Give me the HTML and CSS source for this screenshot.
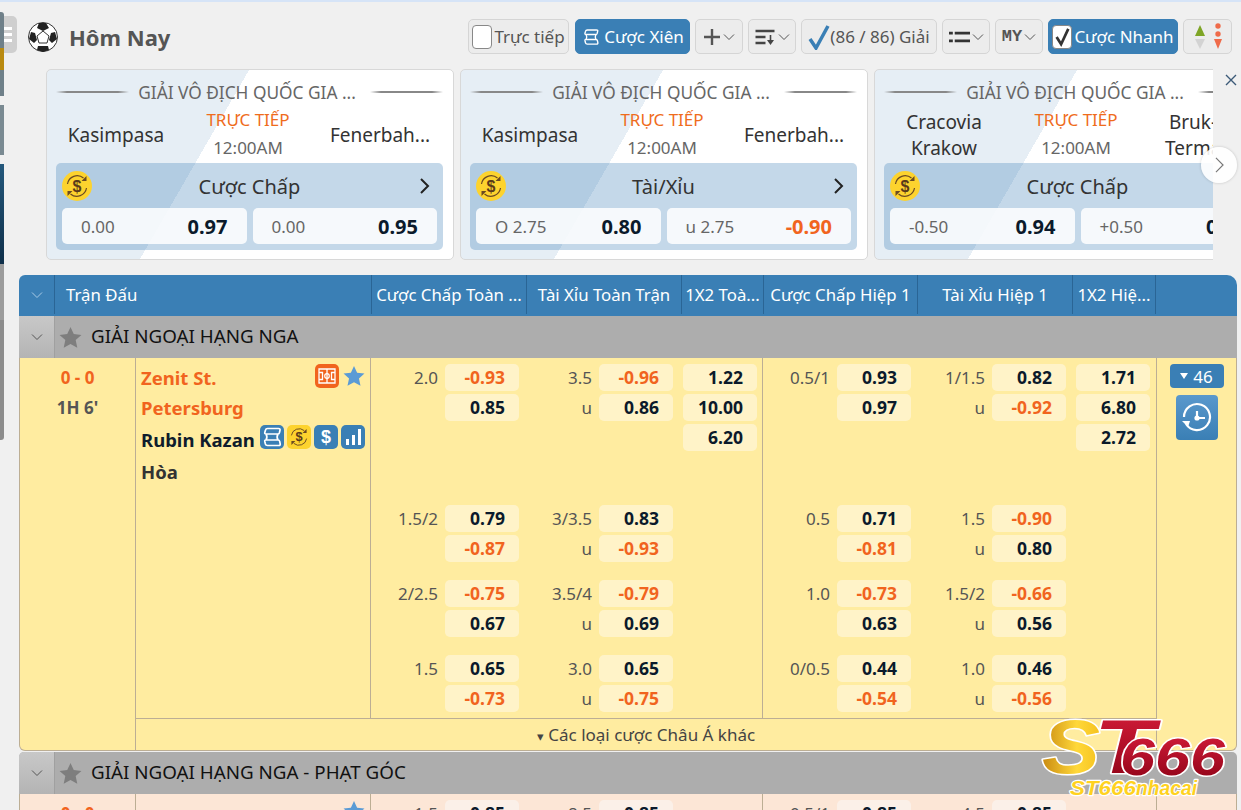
FILE: index.html
```html
<!DOCTYPE html>
<html lang="vi">
<head>
    <meta charset="UTF-8">
    <meta name="viewport" content="width=device-width, initial-scale=1.0">
    <title>Hôm Nay</title>
    <link rel="stylesheet" href="styles.css">
</head>
<body>

<!-- Shared icons -->
<svg class="defs" width="0" height="0">
    <symbol id="i-coin" viewBox="0 0 30 30">
        <path d="M5.500 13a9.800 9.800 0 0 1 16-6M24.500 17a9.800 9.800 0 0 1-16 6" fill="none" stroke="#6b4a22" stroke-width="1.200"/>
        <path d="M24.500 5v5h-5zM5.500 25v-5h5z" fill="#6b4a22"/>
        <text x="15" y="20.500" text-anchor="middle" class="coin-text">$</text>
    </symbol>
    <symbol id="i-parlay" viewBox="0 0 24 24">
        <path d="M7.500 3.500h11q2 0 1.500 1.800l-.6 2.400q-.4 1.300-1.600 1.300H6q-1.600 0-1.200-1.600l.7-2.400q.4-1.500 2-1.500zM6 9c1.200 2 1.200 4 0 6M18 9c-1.200 2-1.200 4 0 6M6 15h12q1.400 0 1.700 1.400l.5 2.400q.3 1.700-1.500 1.700H7.500q-1.700 0-2.100-1.500l-.6-2.500Q4.500 15 6 15z" fill="none" stroke="currentColor" stroke-width="1.700" stroke-linejoin="round"/>
    </symbol>
    <symbol id="i-star" viewBox="0 0 24 24">
        <path d="M12 1l3.400 7.400 8 .9-6 5.400 1.700 8L12 18.700l-7.100 4 1.700-8-6-5.400 8-.9z" fill="currentColor"/>
    </symbol>
    <symbol id="i-chev" viewBox="0 0 12 8">
        <path d="M1 1.500l5 5 5-5" fill="none" stroke="currentColor" stroke-width="1"/>
    </symbol>
</svg>

<!-- Collapsed sidebar behind the page -->
<div class="side-strip">
    <div class="strip-a"></div>
    <div class="strip-b"></div>
    <div class="strip-c"></div>
    <div class="strip-d"></div>
    <div class="strip-e"></div>
</div>
<div class="side-handle"><span></span><span></span><span></span></div>

<div class="page">

    <!-- Title and toolbar -->
    <div class="top-row">
        <div class="page-title">
            <svg class="ball" viewBox="0 0 30 30">
                <circle cx="15" cy="15" r="14.500" fill="#fff" stroke="#333"/>
                <path d="M15 9l6-3-3-5h-7l-2 5zM3 10l4 1 2 7-3 3-5-4zM27 10l-4 1-2 7 3 3 5-4zM10 24h10l1 4-6 2-6-2z" fill="#222"/>
                <path d="M15 9l6 5-2 7h-8l-2-7z" fill="#fff" stroke="#333"/>
            </svg>
            <span>Hôm Nay</span>
        </div>
        <div class="toolbar">
            <div class="tool tool-live"><span class="check"></span>Trực tiếp</div>
            <div class="tool tool-on tool-parlay"><svg class="ic20"><use href="#i-parlay"/></svg>Cược Xiên</div>
            <div class="tool tool-sm">
                <svg class="ic18" viewBox="0 0 18 18"><path d="M9 1v16M1 9h16" stroke="#555" stroke-width="2.400"/></svg>
                <svg class="chev"><use href="#i-chev"/></svg>
            </div>
            <div class="tool tool-sm">
                <svg class="ic22" viewBox="0 0 20 18"><path d="M0 3h19M0 9h10M0 15h10" stroke="#444" stroke-width="2.400"/><path d="M15 7v7" stroke="#444" stroke-width="1.600"/><path d="M11.500 12h7l-3.500 5z" fill="#444"/></svg>
                <svg class="chev"><use href="#i-chev"/></svg>
            </div>
            <div class="tool tool-leagues">
                <svg class="tick" viewBox="0 0 22 26"><path d="M2 15l6 9L20 2" fill="none" stroke="#3a7fb5" stroke-width="3.500"/></svg>(86 / 86) Giải
            </div>
            <div class="tool tool-sm">
                <svg class="ic22" viewBox="0 0 22 18"><path d="M0 5h4M6 5h16M0 13h4M6 13h16" stroke="#333" stroke-width="3"/></svg>
                <svg class="chev"><use href="#i-chev"/></svg>
            </div>
            <div class="tool tool-sm">
                <span class="tool-my">MY</span>
                <svg class="chev"><use href="#i-chev"/></svg>
            </div>
            <div class="tool tool-on tool-quick">
                <span class="check check-on"><svg viewBox="0 0 20 20"><path d="M4 10l5 8L17 1" fill="none" stroke="#333" stroke-width="3"/></svg></span>Cược Nhanh
            </div>
            <div class="tool tool-arrows">
                <svg viewBox="0 0 14 26" class="ic-arrows"><path d="M7 1l5 11H2z" fill="#7ea526"/><path d="M2 15h10l-5 10z" fill="#d3d3d3"/></svg>
                <svg viewBox="0 0 10 28" class="ic-dots"><circle cx="5" cy="3" r="2.700" fill="#ef6b4a"/><circle cx="5" cy="11" r="2.700" fill="#ef6b4a"/><path d="M1 16h8l-4 10z" fill="#ef6b4a"/></svg>
            </div>
        </div>
    </div>

    <!-- Featured matches -->
    <div class="featured">
        <div class="cards">
            <div class="card">
                <div class="card-title"><i></i><span>GIẢI VÔ ĐỊCH QUỐC GIA ...</span><i></i></div>
                <div class="card-teams">
                    <div class="card-team">Kasimpasa</div>
                    <div class="card-mid"><div class="live">TRỰC TIẾP</div><div class="time">12:00AM</div></div>
                    <div class="card-team">Fenerbah...</div>
                </div>
                <div class="card-bar">
                    <div class="bar-head">
                        <span class="coin"><svg><use href="#i-coin"/></svg></span>
                        <span class="bar-name">Cược Chấp</span>
                        <svg class="bar-next" viewBox="0 0 12 18"><path d="M2 2l7 7-7 7" fill="none" stroke="#222" stroke-width="2"/></svg>
                    </div>
                    <div class="bar-odds">
                        <div class="bar-odd"><span>0.00</span><b>0.97</b></div>
                        <div class="bar-odd"><span>0.00</span><b>0.95</b></div>
                    </div>
                </div>
            </div>
            <div class="card">
                <div class="card-title"><i></i><span>GIẢI VÔ ĐỊCH QUỐC GIA ...</span><i></i></div>
                <div class="card-teams">
                    <div class="card-team">Kasimpasa</div>
                    <div class="card-mid"><div class="live">TRỰC TIẾP</div><div class="time">12:00AM</div></div>
                    <div class="card-team">Fenerbah...</div>
                </div>
                <div class="card-bar">
                    <div class="bar-head">
                        <span class="coin"><svg><use href="#i-coin"/></svg></span>
                        <span class="bar-name">Tài/Xỉu</span>
                        <svg class="bar-next" viewBox="0 0 12 18"><path d="M2 2l7 7-7 7" fill="none" stroke="#222" stroke-width="2"/></svg>
                    </div>
                    <div class="bar-odds">
                        <div class="bar-odd"><span>O 2.75</span><b>0.80</b></div>
                        <div class="bar-odd"><span>u 2.75</span><b class="neg">-0.90</b></div>
                    </div>
                </div>
            </div>
            <div class="card">
                <div class="card-title"><i></i><span>GIẢI VÔ ĐỊCH QUỐC GIA ...</span><i></i></div>
                <div class="card-teams">
                    <div class="card-team">Cracovia<br>Krakow</div>
                    <div class="card-mid"><div class="live">TRỰC TIẾP</div><div class="time">12:00AM</div></div>
                    <div class="card-team">Bruk-Bet<br>Termalica</div>
                </div>
                <div class="card-bar">
                    <div class="bar-head">
                        <span class="coin"><svg><use href="#i-coin"/></svg></span>
                        <span class="bar-name">Cược Chấp</span>
                        <svg class="bar-next" viewBox="0 0 12 18"><path d="M2 2l7 7-7 7" fill="none" stroke="#222" stroke-width="2"/></svg>
                    </div>
                    <div class="bar-odds">
                        <div class="bar-odd"><span>-0.50</span><b>0.94</b></div>
                        <div class="bar-odd"><span>+0.50</span><b>0.96</b></div>
                    </div>
                </div>
            </div>
        </div>
        <div class="featured-close">
            <svg viewBox="0 0 12 12"><path d="M1 1l10 10M11 1L1 11" stroke="#3c5a78" stroke-width="1.400"/></svg>
        </div>
        <div class="featured-next">
            <svg viewBox="0 0 10 18"><path d="M1 1l8 8-8 8" fill="none" stroke="#777" stroke-width="1.300"/></svg>
        </div>
    </div>

    <!-- Odds table -->
    <div class="odds-table">
        <div class="table-head">
            <div class="th th-toggle"><svg class="chev chev-head"><use href="#i-chev"/></svg></div>
            <div class="th th-match">Trận Đấu</div>
            <div class="th">Cược Chấp Toàn ...</div>
            <div class="th">Tài Xỉu Toàn Trận</div>
            <div class="th">1X2 Toà...</div>
            <div class="th">Cược Chấp Hiệp 1</div>
            <div class="th">Tài Xỉu Hiệp 1</div>
            <div class="th">1X2 Hiệ...</div>
            <div class="th th-last"></div>
        </div>

        <div class="league">
            <div class="league-toggle"><svg class="chev"><use href="#i-chev"/></svg></div>
            <svg class="league-star"><use href="#i-star"/></svg>
            <span>GIẢI NGOẠI HẠNG NGA</span>
        </div>

        <div class="match">
            <div class="score">
                <div class="score-num">0 - 0</div>
                <div class="score-time">1H 6'</div>
            </div>
            <div class="match-mid">
                <div class="match-top">
                    <div class="teams">
                        <div class="team team-home">
                            <span class="team-name">Zenit St.<br>Petersburg</span>
                            <span class="team-icons">
                                <span class="badge badge-orange">
                                    <svg viewBox="0 0 24 24"><path d="M4 5h16v14H4zM12 5v14M4 8.500h3.500v7H4M20 8.500h-3.500v7H20" fill="none" stroke="#fff" stroke-width="1.300"/><circle cx="12" cy="12" r="2.300" fill="none" stroke="#fff" stroke-width="1.200"/></svg>
                                </span>
                                <svg class="fav"><use href="#i-star"/></svg>
                            </span>
                        </div>
                        <div class="team">
                            <span class="team-name">Rubin Kazan</span>
                            <span class="team-icons team-icons-tight">
                                <span class="badge badge-blue"><svg><use href="#i-parlay"/></svg></span>
                                <span class="badge badge-yellow"><svg><use href="#i-coin"/></svg></span>
                                <span class="badge badge-blue badge-dollar">$</span>
                                <span class="badge badge-blue">
                                    <svg viewBox="0 0 24 24"><path d="M5 14h3v6H5zM11 10h3v10h-3zM17 4h3v16h-3z" fill="#fff"/></svg>
                                </span>
                            </span>
                        </div>
                        <div class="team team-draw"><span class="team-name">Hòa</span></div>
                    </div>
                    <div class="lines">
                        <div class="line line-first">
                            <div class="cell"><div class="hdp"><span>2.0</span></div><div class="prices"><div class="price neg">-0.93</div><div class="price">0.85</div></div></div>
                            <div class="cell"><div class="hdp"><span>3.5</span><span>u</span></div><div class="prices"><div class="price neg">-0.96</div><div class="price">0.86</div></div></div>
                            <div class="cell cell-x"><div class="prices"><div class="price">1.22</div><div class="price">10.00</div><div class="price">6.20</div></div></div>
                            <div class="cell"><div class="hdp"><span>0.5/1</span></div><div class="prices"><div class="price">0.93</div><div class="price">0.97</div></div></div>
                            <div class="cell"><div class="hdp"><span>1/1.5</span><span>u</span></div><div class="prices"><div class="price">0.82</div><div class="price neg">-0.92</div></div></div>
                            <div class="cell cell-x"><div class="prices"><div class="price">1.71</div><div class="price">6.80</div><div class="price">2.72</div></div></div>
                        </div>
                        <div class="line">
                            <div class="cell"><div class="hdp"><span>1.5/2</span></div><div class="prices"><div class="price">0.79</div><div class="price neg">-0.87</div></div></div>
                            <div class="cell"><div class="hdp"><span>3/3.5</span><span>u</span></div><div class="prices"><div class="price">0.83</div><div class="price neg">-0.93</div></div></div>
                            <div class="cell cell-x"></div>
                            <div class="cell"><div class="hdp"><span>0.5</span></div><div class="prices"><div class="price">0.71</div><div class="price neg">-0.81</div></div></div>
                            <div class="cell"><div class="hdp"><span>1.5</span><span>u</span></div><div class="prices"><div class="price neg">-0.90</div><div class="price">0.80</div></div></div>
                            <div class="cell cell-x"></div>
                        </div>
                        <div class="line">
                            <div class="cell"><div class="hdp"><span>2/2.5</span></div><div class="prices"><div class="price neg">-0.75</div><div class="price">0.67</div></div></div>
                            <div class="cell"><div class="hdp"><span>3.5/4</span><span>u</span></div><div class="prices"><div class="price neg">-0.79</div><div class="price">0.69</div></div></div>
                            <div class="cell cell-x"></div>
                            <div class="cell"><div class="hdp"><span>1.0</span></div><div class="prices"><div class="price neg">-0.73</div><div class="price">0.63</div></div></div>
                            <div class="cell"><div class="hdp"><span>1.5/2</span><span>u</span></div><div class="prices"><div class="price neg">-0.66</div><div class="price">0.56</div></div></div>
                            <div class="cell cell-x"></div>
                        </div>
                        <div class="line line-last">
                            <div class="cell"><div class="hdp"><span>1.5</span></div><div class="prices"><div class="price">0.65</div><div class="price neg">-0.73</div></div></div>
                            <div class="cell"><div class="hdp"><span>3.0</span><span>u</span></div><div class="prices"><div class="price">0.65</div><div class="price neg">-0.75</div></div></div>
                            <div class="cell cell-x"></div>
                            <div class="cell"><div class="hdp"><span>0/0.5</span></div><div class="prices"><div class="price">0.44</div><div class="price neg">-0.54</div></div></div>
                            <div class="cell"><div class="hdp"><span>1.0</span><span>u</span></div><div class="prices"><div class="price">0.46</div><div class="price neg">-0.56</div></div></div>
                            <div class="cell cell-x"></div>
                        </div>
                    </div>
                </div>
                <div class="match-more"><span class="caret">▾</span> Các loại cược Châu Á khác</div>
            </div>
            <div class="match-side">
                <div class="more-count"><span class="caret-w"></span>46</div>
                <div class="history">
                    <svg viewBox="0 0 32 32"><path d="M5 22A13 13 0 1 0 3 15" fill="none" stroke="#fff" stroke-width="2.200"/><path d="M1 19l6 6 2-6z" fill="#fff"/><path d="M16 9v7h8" fill="none" stroke="#fff" stroke-width="2.200"/><circle cx="16" cy="16" r="2.600" fill="#fff"/></svg>
                </div>
            </div>
        </div>

        <div class="league league-next">
            <div class="league-toggle"><svg class="chev"><use href="#i-chev"/></svg></div>
            <svg class="league-star"><use href="#i-star"/></svg>
            <span>GIẢI NGOẠI HẠNG NGA - PHẠT GÓC</span>
        </div>

        <div class="match match-alt">
            <div class="score">
                <div class="score-num">0 - 0</div>
            </div>
            <div class="match-mid">
                <div class="match-top">
                    <div class="teams">
                        <div class="team team-home">
                            <span class="team-name"></span>
                            <span class="team-icons"><svg class="fav"><use href="#i-star"/></svg></span>
                        </div>
                    </div>
                    <div class="lines">
                        <div class="line">
                            <div class="cell"><div class="hdp"><span>1.5</span></div><div class="prices"><div class="price">0.85</div></div></div>
                            <div class="cell"><div class="hdp"><span>8.5</span></div><div class="prices"><div class="price">0.85</div></div></div>
                            <div class="cell cell-x"></div>
                            <div class="cell"><div class="hdp"><span>0.5/1</span></div><div class="prices"><div class="price">0.85</div></div></div>
                            <div class="cell"><div class="hdp"><span>4.5</span></div><div class="prices"><div class="price">0.85</div></div></div>
                            <div class="cell cell-x"></div>
                        </div>
                    </div>
                </div>
            </div>
            <div class="match-side"></div>
        </div>
    </div>
</div>

<!-- Site watermark -->
<svg class="watermark" viewBox="0 0 200 90">
    <defs>
        <linearGradient id="wm-gold" x1="0" y1="0" x2="1" y2="0">
            <stop offset="0" stop-color="#c98a10"/>
            <stop offset="0.6" stop-color="#ffd83a"/>
            <stop offset="1" stop-color="#f5c21e"/>
        </linearGradient>
        <linearGradient id="wm-red" x1="0" y1="0" x2="0" y2="1">
            <stop offset="0" stop-color="#d81f3c"/>
            <stop offset="1" stop-color="#8a0014"/>
        </linearGradient>
    </defs>
    <text x="54" y="59" class="wm-big" fill="url(#wm-red)" textLength="60" lengthAdjust="spacingAndGlyphs">T</text>
    <text x="2" y="59" class="wm-big" fill="url(#wm-gold)" textLength="58" lengthAdjust="spacingAndGlyphs">S</text>
    <text x="80" y="61" class="wm-num" fill="url(#wm-red)" textLength="105" lengthAdjust="spacingAndGlyphs">666</text>
    <text x="30" y="81" class="wm-small" fill="#ffd21f" textLength="66" lengthAdjust="spacingAndGlyphs">ST666</text>
    <text x="96" y="81" class="wm-small" fill="#ffd21f" textLength="61" lengthAdjust="spacingAndGlyphs">nhacai</text>
</svg>

</body>
</html>
```

FILE: styles.css
```css
/* General Body Styles */
html, body {
    height: 810px;
    overflow: hidden;
}

body {
    margin: 0;
    background-color: #f0f0f0;
    font-family: "Noto Sans", "Open Sans", Arial, sans-serif;
    color: #333;
    border-top: 2px solid #d6e4f7;
    box-sizing: border-box;
}

.defs {
    position: absolute;
}

.coin-text {
    font: bold 16px "Liberation Sans", sans-serif;
    fill: #5a3a1a;
}

/* Collapsed Sidebar */
.side-strip {
    position: absolute;
    left: 0;
    top: 12px;
    width: 4px;
    height: 428px;
    display: flex;
    flex-direction: column;
    border-radius: 0 3px 3px 0;
    overflow: hidden;
}

.strip-a { height: 84px; background: linear-gradient(#6f8089 0 36px, #b98a10 36px 58px, #6f8089 58px); }
.strip-b { height: 50px; background-color: #7a8a92; margin-top: 9px; }
.strip-c { height: 100px; background: linear-gradient(#24587c, #0f2f4a); margin-top: 9px; }
.strip-d { height: 56px; background-color: #9c9c9c; }
.strip-e { flex: 1; background-color: #8c8c8c; }

.side-handle {
    position: absolute;
    left: 4px;
    top: 16px;
    width: 13px;
    height: 37px;
    background-color: #cfcfcf;
    border-radius: 0 5px 5px 0;
    display: flex;
    flex-direction: column;
    justify-content: center;
    gap: 3px;
}

.side-handle span {
    display: block;
    width: 8px;
    height: 3px;
    background-color: #fff;
}

/* Page */
.page {
    margin-left: 19px;
    width: 1218px;
}

/* Title and Toolbar */
.top-row {
    height: 67px;
    display: flex;
    justify-content: space-between;
    align-items: flex-start;
    padding-top: 17px;
    box-sizing: border-box;
}

.page-title {
    display: flex;
    align-items: center;
    gap: 11px;
    margin-left: 9px;
    margin-top: 3px;
    font-size: 22px;
    font-weight: bold;
    color: #555;
}

.ball {
    width: 30px;
    height: 30px;
}

.toolbar {
    display: flex;
    gap: 5px;
    margin-right: 5px;
}

.tool {
    height: 35px;
    box-sizing: border-box;
    display: flex;
    align-items: center;
    justify-content: center;
    background-color: #ececec;
    border: 1px solid #d5d5d5;
    border-radius: 5px;
    font-size: 17px;
    color: #555;
    white-space: nowrap;
}

.tool-on {
    background-color: #3a7fb5;
    border-color: #3a7fb5;
    color: #fff;
}

.tool-live { width: 101px; }
.tool-parlay { width: 115px; gap: 3px; margin-left: 1px; }
.tool-sm { width: 48px; gap: 2px; }
.tool-leagues { width: 136px; }
.tool-quick { width: 130px; }
.tool-arrows { width: 49px; gap: 6px; }

.ic20 {
    width: 20px;
    height: 20px;
}

.ic18 {
    width: 18px;
    height: 18px;
}

.ic22 {
    width: 21px;
    height: 18px;
}

.tick {
    width: 22px;
    height: 26px;
}

.tool-my {
    font: bold 17px "Liberation Mono", monospace;
    color: #555;
}

.ic-arrows {
    width: 14px;
    height: 26px;
}

.ic-dots {
    width: 10px;
    height: 28px;
}

.check {
    width: 20px;
    height: 24px;
    box-sizing: border-box;
    background-color: #fff;
    border: 1px solid #888;
    border-radius: 4px;
    margin-right: 2px;
    display: block;
}

.check-on svg {
    display: block;
    width: 18px;
    height: 22px;
}

.chev {
    width: 12px;
    height: 8px;
    color: #555;
}

/* Featured Matches */
.featured {
    margin-left: 27px;
    position: relative;
}

.cards {
    width: 1167px;
    height: 191px;
    display: flex;
    gap: 6px;
    overflow: hidden;
}

.card {
    flex: 0 0 408px;
    box-sizing: border-box;
    height: 191px;
    padding: 10px 10px 0 9px;
    border: 1px solid #d8d8d8;
    border-radius: 5px;
    background: linear-gradient(120deg, #e6eef5 175px, #fff 175px);
}

.card-title {
    display: flex;
    align-items: center;
    gap: 9px;
    height: 24px;
    font-size: 17.300px;
    color: #666;
    white-space: nowrap;
}

.card-title span {
    padding-right: 5px;
}

.card-title i {
    flex: 1;
    height: 2px;
    background: linear-gradient(90deg, transparent, #888 15%, #888 85%, transparent);
}

.card-teams {
    display: flex;
    align-items: center;
    height: 59px;
}

.card-team {
    flex: 0 0 120px;
    text-align: center;
    font-size: 19px;
    line-height: 26px;
    height: 52px;
    margin-top: 3px;
    display: flex;
    align-items: center;
    justify-content: center;
    white-space: nowrap;
    color: #333;
}

.card-team:last-child {
    margin-right: 3px;
}

.card-mid {
    flex: 1;
    text-align: center;
}

.live {
    color: #ef6c1c;
    font-size: 17px;
    line-height: 28px;
    padding-top: 1px;
}

.time {
    color: #666;
    font-size: 17px;
    line-height: 28px;
}

.card-bar {
    height: 87px;
    padding: 8px 6px 0;
    box-sizing: border-box;
    border-radius: 5px;
    background-color: rgba(58, 127, 181, 0.3);
}

.bar-head {
    display: flex;
    align-items: center;
    justify-content: space-between;
    height: 30px;
    position: relative;
}

.coin {
    width: 30px;
    height: 30px;
    border-radius: 50%;
    background-color: #fdd32e;
}

.coin svg {
    display: block;
    width: 30px;
    height: 30px;
}

.bar-name {
    font-size: 20px;
    color: #333;
    position: absolute;
    left: 0;
    right: 0;
    text-align: center;
}

.bar-next {
    width: 12px;
    height: 18px;
    margin-right: 6px;
}

.bar-odds {
    display: flex;
    gap: 6px;
    margin-top: 7px;
}

.bar-odd {
    flex: 1;
    height: 36px;
    padding: 0 19px;
    display: flex;
    align-items: center;
    justify-content: space-between;
    border-radius: 5px;
    background-color: rgba(255, 255, 255, 0.85);
    font-size: 17px;
    color: #666;
}

.bar-odd b {
    font-size: 20px;
    color: #0b1a2b;
}

.bar-odd b.neg {
    color: #f1641e;
}

.featured-close {
    position: absolute;
    left: 1179px;
    top: 5px;
    width: 12px;
    height: 12px;
}

.featured-close svg {
    display: block;
}

.featured-next {
    position: absolute;
    left: 1155px;
    top: 78px;
    width: 36px;
    height: 36px;
    border-radius: 50%;
    background-color: rgba(255, 255, 255, 0.9);
    box-shadow: 0 0 3px rgba(0, 0, 0, 0.2);
    display: flex;
    align-items: center;
    justify-content: center;
}

.featured-next svg {
    width: 9px;
    height: 16px;
}

/* Odds Table */
.odds-table {
    margin-top: 15px;
}

.table-head {
    height: 41px;
    display: grid;
    grid-template-columns: 36px 317px 155px 155px 82px 154px 155px 83px 81px;
    background-color: #3a7fb5;
    border-radius: 6px 10px 0 0;
    color: #fff;
    font-size: 16.800px;
}

.th {
    height: 39px;
    display: flex;
    align-items: center;
    justify-content: center;
    border-right: 1px solid #2a6595;
    white-space: nowrap;
    overflow: hidden;
}

.th-match {
    justify-content: flex-start;
    padding-left: 11px;
}

.th-last {
    border-right: none;
}

.chev-head {
    color: #a9cbe6;
}

.league {
    height: 42px;
    display: flex;
    align-items: center;
    background-color: #adadad;
    color: #111;
    font-size: 18.800px;
}

.league span {
    margin-top: -2px;
}

.league-next {
    margin-top: 1px;
    border-radius: 5px 5px 0 0;
    overflow: hidden;
}

.league-toggle {
    width: 36px;
    height: 100%;
    box-sizing: border-box;
    display: flex;
    align-items: center;
    justify-content: center;
    background: linear-gradient(#c8c8c8, #b4b4b4);
    border-right: 1px solid #a0a0a0;
}

.league-star {
    width: 23px;
    height: 23px;
    margin: 0 9px 0 4px;
    color: #7e7e7e;
}

/* Match Rows */
.match {
    display: flex;
    background-color: #ffeca0;
    border: 1px solid #bcae94;
    border-top: none;
    box-sizing: border-box;
    height: 393px;
    border-radius: 0 0 6px 6px;
}

.match-alt {
    height: 16px;
    overflow: hidden;
    background-color: #fce6d6;
    border-bottom: none;
    border-radius: 0;
}

.score {
    width: 115px;
    flex: none;
    text-align: center;
    padding-top: 5px;
    font-weight: bold;
    font-size: 17px;
    line-height: 30px;
    color: #555;
    border-right: 1px solid #bcae94;
}

.score-num {
    color: #f1641e;
}

.match-mid {
    width: 1020px;
    flex: none;
    display: flex;
    flex-direction: column;
    border-right: 1px solid #bcae94;
}

.match-top {
    flex: 1;
    display: flex;
}

.teams {
    width: 224px;
    flex: none;
    padding: 5px 5px 0 5px;
    border-right: 1px solid #bcae94;
    font-size: 18.500px;
    font-weight: bold;
    line-height: 30px;
    color: #0f1c2c;
}

.team {
    display: flex;
    justify-content: space-between;
    align-items: flex-start;
    padding-bottom: 2px;
}

.team-home {
    color: #f1641e;
}

.team-draw {
    color: #333;
}

.team-icons {
    display: flex;
    align-items: center;
    gap: 4px;
    padding-top: 1px;
}

.team-icons-tight {
    gap: 3px;
    padding-top: 0;
}

.badge {
    width: 24px;
    height: 24px;
    border-radius: 5px;
    display: block;
    color: #fff;
    text-align: center;
}

.badge svg {
    display: block;
    width: 24px;
    height: 24px;
}

.badge-orange { background-color: #f1641e; }
.badge-blue { background-color: #3a7fb5; }
.badge-yellow { background-color: #fdd32e; }

.badge-dollar {
    font: bold 18px/24px "Liberation Sans", sans-serif;
}

.fav {
    width: 22px;
    height: 22px;
    color: #5b9bd5;
}

.lines {
    flex: 1;
}

.line {
    display: grid;
    grid-template-columns: 155px 154px 83px 155px 155px 82px;
    height: 75px;
    box-sizing: border-box;
    padding-top: 6px;
}

.line-first {
    height: 141px;
}

.line-last {
    height: 69px;
}

.cell {
    display: flex;
    justify-content: flex-end;
    gap: 7px;
    padding-right: 7px;
    margin-top: -6px;
    padding-top: 6px;
}

.cell-x {
    padding-right: 5px;
    border-right: 1px solid #bcae94;
}

.line .cell:last-child {
    border-right: none;
}

.hdp {
    text-align: right;
    font-size: 17px;
    color: #555;
}

.hdp span {
    display: block;
    height: 27px;
    line-height: 27px;
    margin-bottom: 3px;
}

.prices {
    width: 74px;
}

.price {
    height: 27px;
    line-height: 27px;
    margin-bottom: 3px;
    padding-right: 14px;
    box-sizing: border-box;
    text-align: right;
    font-size: 17.500px;
    font-weight: bold;
    color: #0b1a2b;
    background-color: #fff3c8;
    border-radius: 5px;
}

.match-alt .price {
    background-color: #fbf0e8;
}

.price.neg {
    color: #f1641e;
}

.match-more {
    height: 32px;
    line-height: 32px;
    border-top: 1px solid #bcae94;
    text-align: center;
    font-size: 17px;
    color: #444;
}

.caret {
    font-size: 13px;
}

.match-side {
    flex: 1;
    display: flex;
    flex-direction: column;
    align-items: center;
    padding-top: 6px;
}

.more-count {
    width: 54px;
    height: 24px;
    box-sizing: border-box;
    display: flex;
    align-items: center;
    justify-content: center;
    gap: 5px;
    border-radius: 4px;
    background-color: #3a7fb5;
    color: #fff;
    font-size: 17px;
}

.caret-w {
    width: 0;
    height: 0;
    border-left: 4px solid transparent;
    border-right: 4px solid transparent;
    border-top: 6px solid #fff;
}

.history {
    width: 42px;
    height: 45px;
    margin-top: 7px;
    border-radius: 4px;
    background: linear-gradient(#5a98cc, #3a7fb5);
    display: flex;
    align-items: center;
    justify-content: center;
}

.history svg {
    width: 32px;
    height: 32px;
}

/* Watermark */
.watermark {
    position: absolute;
    left: 1040px;
    top: 714px;
    width: 200px;
    height: 90px;
    overflow: visible;
}

.watermark text {
    paint-order: stroke;
    stroke: #fff;
    stroke-linejoin: round;
    font-family: "Liberation Sans", sans-serif;
    font-weight: bold;
    font-style: italic;
}

.wm-big {
    font-size: 76px;
    stroke-width: 3px;
}

.wm-num {
    font-size: 52px;
    stroke-width: 3px;
}

.wm-small {
    font-size: 21px;
    stroke-width: 2.500px;
}
```
